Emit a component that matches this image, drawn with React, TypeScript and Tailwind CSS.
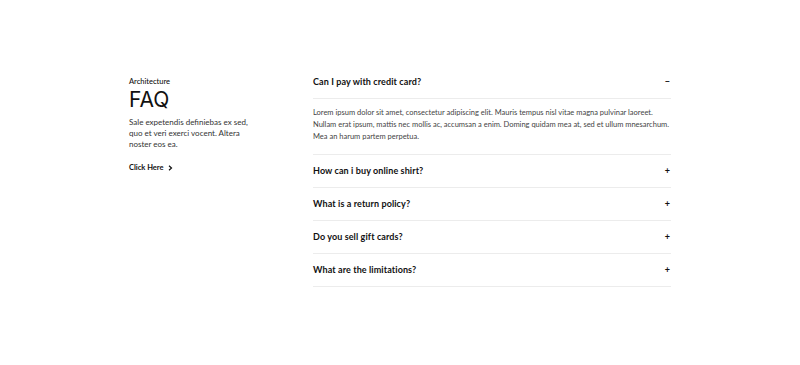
import React, { useState } from "react";

const faqs = [
  {
    q: "Can I pay with credit card?",
    a: "Lorem ipsum dolor sit amet, consectetur adipiscing elit. Mauris tempus nisl vitae magna pulvinar laoreet. Nullam erat ipsum, mattis nec mollis ac, accumsan a enim. Doming quidam mea at, sed et ullum mnesarchum. Mea an harum partem perpetua.",
  },
  { q: "How can i buy online shirt?", a: "" },
  { q: "What is a return policy?", a: "" },
  { q: "Do you sell gift cards?", a: "" },
  { q: "What are the limitations?", a: "" },
];

export default function App() {
  const [open, setOpen] = useState(0);

  return (
    <div className="w-full h-[365px] bg-white font-['Lato','Noto_Sans',sans-serif] text-[#111]">
      <div className="flex pt-[66px] pl-[129px]">
        <div className="w-[184px] pt-[11px]">
          <p className="text-[7.5px] font-medium leading-[9px]">Architecture</p>
          <h2 className="text-[21px] leading-[26px] font-normal mt-[1px] font-['Inter',sans-serif]">FAQ</h2>
          <p className="text-[8px] leading-[11px] text-[#333] w-[122px] mt-[4px]">
            Sale expetendis definiebas ex sed, quo et veri exerci vocent. Altera noster eos ea.
          </p>
          <a href="#" className="inline-flex items-center gap-[4px] text-[7.5px] font-bold mt-[12px]">
            Click Here
            <svg width="5" height="6" viewBox="0 0 5 6" fill="none">
              <path d="M1 0.8 L3.5 3 L1 5.2" stroke="#111" strokeWidth="1.2" />
            </svg>
          </a>
        </div>

        <div className="w-[358px]">
          {faqs.map((f, i) => (
            <div key={f.q} className="border-b border-[#ececec]">
              <button
                onClick={() => setOpen(open === i ? -1 : i)}
                className="w-full h-[32px] flex items-center justify-between text-left"
              >
                <span className="text-[9px] font-bold tracking-[0.1px]">{f.q}</span>
                <span className="text-[9px] font-bold pr-[1px]">{open === i ? "−" : "+"}</span>
              </button>
              {open === i && (
                <div className="border-t border-[#ececec] pt-[8px] pb-[11px]">
                  <p className="text-[7.5px] leading-[12px] text-[#444]">{f.a}</p>
                </div>
              )}
            </div>
          ))}
        </div>
      </div>
    </div>
  );
}
